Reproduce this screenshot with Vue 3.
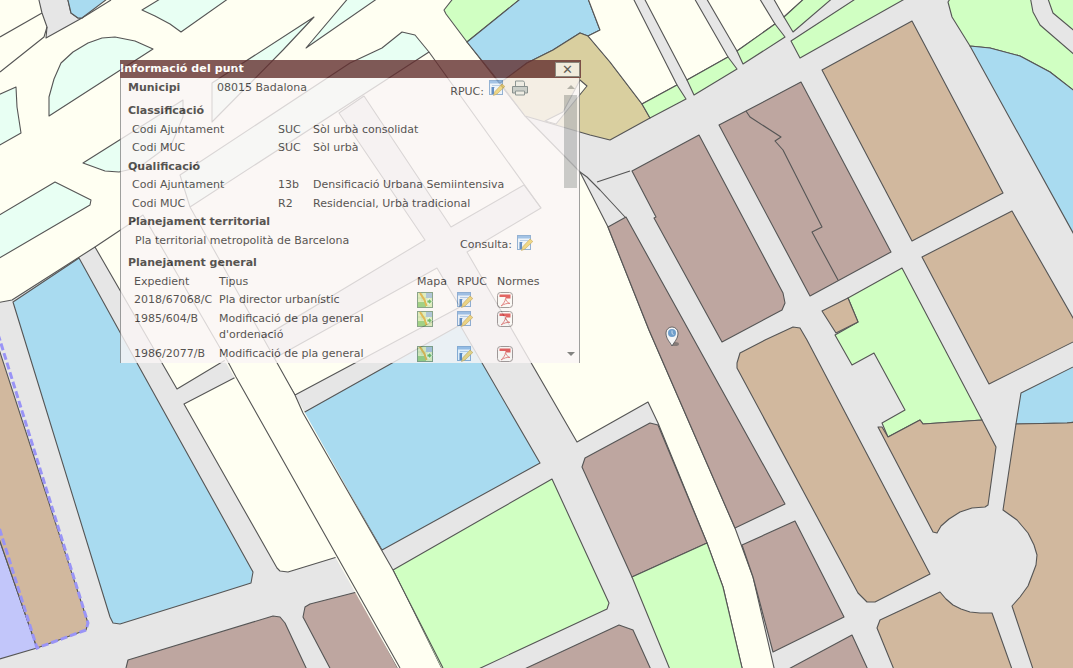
<script setup>
const raw = [
  ['ivory','0,0 600,0 467,42 525,116 580,172 608,227 649,330 735,528 753,577 775,668 743,668 723,587 707,543 658,423 648,402 577,442 467,252 541,208 524,185 451,227 364,96 339,113 425,240 177,389 95,247 12,300 0,303'],
  ['ivory','184,404 236,377 337,557 288,572 280,571 277,568'],
  ['ivory','273,359 437,268 460,307 295,395'],
  ['grey','38,0 67,0 71,13 78,18 82,18 46,38 47,27 42,13'],
  ['blue','67,0 111,0 82,18 78,18 71,13'],
  ['mint','142,10 165,0 232,0 181,32 170,24 155,16'],
  ['mint','49,116 49,97 54,79 61,63 73,52 88,43 102,38 115,37 135,41 153,49'],
  ['mint','0,96 16,87 17,107 21,133 0,147'],
  ['mint','83,163 183,100 183,117 172,143 145,163 132,169 119,172 105,171'],
  ['mint','0,217 55,182 91,200 90,205 0,260'],
  ['mint','212,83 314,17 283,50 212,122'],
  ['mint','306,48 350,0 381,0'],
  ['mint','350,63 382,48 402,32 415,35 429,52 190,207 180,175'],
  ['green','444,10 455,0 524,0 467,42 446,14'],
  ['blue','467,42 524,0 587,0 600,30 588,36 580,33 553,50 527,63 500,83'],
  ['khaki','500,83 527,63 553,50 580,33 588,36 610,62 642,104 650,118 610,140 590,135 525,116'],
  ['ivory','580,80 587,86 556,124 545,121 563,112'],
  ['ivory','600,30 587,0 632,0 677,85 642,104 610,62 588,36'],
  ['green','642,104 677,85 686,99 650,118'],
  ['ivory','643,0 693,0 728,57 687,80'],
  ['green','687,80 728,57 737,69 694,95'],
  ['ivory','705,0 758,0 775,24 737,51'],
  ['green','737,51 775,24 785,37 743,64'],
  ['ivory','772,0 807,0 784,17'],
  ['green','784,17 807,0 835,0 793,32'],
  ['green','791,41 860,0 910,0 800,58'],
  ['green','948,2 952,0 1030,0 1033,12 1040,25 1073,57 1073,93 1050,72 1020,56 990,48 970,46 952,17'],
  ['green','1047,0 1073,0 1073,33 1053,13'],
  ['blue','970,46 990,48 1020,56 1050,72 1073,93 1073,240'],
  ['brown','632,171 699,135 783,293 785,303 782,310 722,342 654,218 656,217'],
  ['brown','719,125 746,111 801,82 891,252 810,296'],
  ['tan','822,70 912,21 1003,193 912,241'],
  ['tan','922,257 1012,211 1073,325 1073,340 989,384'],
  ['brown','608,227 626,217 785,504 735,528 649,330'],
  ['green','848,298 902,268 982,420 923,424 920,420 888,437 882,423 905,410 874,353 852,365 835,335 858,322'],
  ['tan','822,311 848,298 858,322 836,333'],
  ['tan','737,368 737,363 740,353 765,340 793,327 800,328 807,340 930,574 875,602 867,602 858,593'],
  ['tan','878,427 882,427 888,437 920,420 923,424 982,420 996,447 988,505 985,507 972,508 960,512 949,519 941,526 937,533 933,532'],
  ['blue','1021,393 1073,365 1073,422 1067,423 1016,424'],
  ['tan','1016,424 1067,423 1073,422 1073,668 1034,668 1012,606 1020,597 1028,586 1033,573 1036,565 1037,555 1034,545 1028,533 1017,520 1003,510'],
  ['tan','877,628 880,620 940,592 946,599 953,605 961,609 970,612 980,613 992,613 1013,668 895,668'],
  ['brown','582,467 585,458 650,423 658,425 707,543 632,577'],
  ['green','632,577 707,543 723,587 743,668 671,668'],
  ['brown','742,545 795,521 844,617 773,652 753,577'],
  ['brown','783,668 852,635 869,668'],
  ['brown','518,668 619,625 633,630 652,668'],
  ['blue','13,302 79,258 137,363 253,572 251,583 213,595 120,624 113,623 110,617'],
  ['blue','303,413 460,325 540,463 382,550'],
  ['green','393,570 552,479 609,603 607,609 472,668 443,668'],
  ['brown','125,668 128,660 273,616 280,617 285,623 308,668'],
  ['brown','303,617 305,607 310,604 357,592 400,668 332,668'],
  ['lilac','0,530 37,648 0,660'],
  ['tan','0,340 88,623 86,630 37,648 0,530'],
]
// Push edges lying on the picture border outside it, so their outline is not seen.
const bleed = (pts) => pts.split(' ').map((p) => {
  let [x, y] = p.split(',').map(Number)
  if (x === 0) x = -4
  if (x === 1073) x = 1077
  if (y === 0) y = -4
  if (y === 668) y = 672
  return `${x},${y}`
}).join(' ')
const shapes = raw.map(([c, p]) => [c, bleed(p)])
const road = bleed('143,215 190,207 295,395 393,570 443,668 400,668')
const lines = [
  '0,37 42,13',
  '0,72 44,37 47,27',
  '82,18 111,0',
  '95,247 143,215 227,360 236,377 400,668',
  '190,207 295,395 303,413 393,570 443,668',
  '429,52 541,208',
  '580,172 587,177 600,190 625,217',
  '597,182 630,171',
  '746,111 750,117 781,137 775,141 783,150 822,227 812,232 838,280',
]

const cols = [
  [
    { t: 'Codi Ajuntament', c: 'SUC', d: 'Sòl urbà consolidat' },
    { t: 'Codi MUC', c: 'SUC', d: 'Sòl urbà' },
  ],
  [
    { t: 'Codi Ajuntament', c: '13b', d: 'Densificació Urbana Semiintensiva' },
    { t: 'Codi MUC', c: 'R2', d: 'Residencial, Urbà tradicional' },
  ],
]
const plans = [
  { e: '2018/67068/C', t: 'Pla director urbanístic' },
  { e: '1985/604/B', t: "Modificació de pla general d'ordenació" },
  { e: '1986/2077/B', t: 'Modificació de pla general' },
]
</script>

<template>
  <div class="page">
    <svg class="map" viewBox="0 0 1073 668" width="1073" height="668">
      <defs>
        <symbol id="i-map" viewBox="0 0 16 16">
          <rect x=".5" y=".5" width="15" height="15" fill="#d8e8b0" stroke="#6f8f70"/>
          <path d="M9 1h6v5H9z" fill="#9db8d0"/>
          <path d="M1 10h8v5H1z" fill="#8cc66c"/>
          <path d="M1 6h8M5 1v8" stroke="#b7cf94" stroke-width=".7"/>
          <path d="M3 1 7.500 8l2 6" fill="none" stroke="#d9a830" stroke-width="2"/>
          <path d="M10 8h2V6l3 3.500-3 3.500v-2h-2z" fill="#58ac48" stroke="#f4fff0" stroke-width=".7"/>
        </symbol>
        <symbol id="i-edit" viewBox="0 0 16 16">
          <rect x=".5" y=".5" width="13" height="14" fill="#eaf2fb" stroke="#7aa0cc"/>
          <rect x="1" y="1" width="12" height="2.500" fill="#8db5e3"/>
          <path d="M3 5.500h8M3 7.500h3" stroke="#a9c4e4"/>
          <rect x="2.500" y="7" width="2.500" height="7" fill="#3f74b8"/>
          <path d="M13 4 15.800 6.500 8 14l-3.500 1.500L6 11.500z" fill="#edcf6c" stroke="#b8953a" stroke-width=".6"/>
        </symbol>
        <symbol id="i-pdf" viewBox="0 0 16 16">
          <rect x=".5" y=".5" width="15" height="15" rx="3" fill="#fbf8f6" stroke="#8d8585"/>
          <path d="M2.500 2.500h11v4H8.500V5H2.500z" fill="#dc4040"/>
          <path d="M8.500 6.500c0 3-3 6-4.500 7.500 3-2 6-3 9-2.500-3-1-4-3-4.500-5z" fill="none" stroke="#dc6a6a"/>
        </symbol>
        <symbol id="i-print" viewBox="0 0 16 16">
          <path d="M3.500 7V1h8l1 1.500V7z" fill="#f4f4f4" stroke="#7d8a92"/>
          <path d="M.5 6.500h15v6.500H.5z" fill="#c7ced3" stroke="#76828a" stroke-linejoin="round"/>
          <path d="M3.500 11h9v4h-9z" fill="#f4f4f4" stroke="#7d8a92"/>
        </symbol>
      </defs>
      <rect width="1073" height="668" class="grey"/>
      <polygon v-for="(s, i) in shapes" :key="i" :class="s[0]" class="area" :points="s[1]"/>
      <polygon class="ivory" :points="road"/>
      <polyline v-for="(l, i) in lines" :key="'l' + i" class="line" :points="l"/>
      <polygon class="dash" points="-2,334 88,623 86,630 37,648 -2,524"/>
      <g>
        <ellipse cx="675" cy="344" rx="4" ry="2" fill="#555" opacity=".55"/>
        <path d="M672 346c-2-4-6-7-6-13a6 6 0 0 1 12 0c0 6-4 9-6 13z" fill="#f5f5f5" stroke="#3a3f44" stroke-width=".7"/>
        <circle cx="672" cy="333" r="4" fill="#6f9ecb"/>
        <path d="M672 330.500v3l1.500 1" stroke="#e6eef6" fill="none" stroke-width=".8"/>
      </g>
    </svg>

    <section class="dialog">
      <header class="title">
        <span>Informació del punt</span>
        <button class="close">✕</button>
      </header>
      <div class="body">
        <div class="content">
          <div class="row muni">
            <b class="muni-label">Municipi</b>
            <span>08015 Badalona</span>
            <span class="right rpuc">RPUC:</span>
            <svg class="ic-top"><use href="#i-edit"/></svg>
            <svg class="ic-print"><use href="#i-print"/></svg>
          </div>
          <div class="row head gap1">Classificació</div>
          <div v-for="r in cols[0]" :key="r.t" class="row cls">
            <span>{{ r.t }}</span><span>{{ r.c }}</span><span>{{ r.d }}</span>
          </div>
          <div class="row head">Qualificació</div>
          <div v-for="r in cols[1]" :key="r.t" class="row cls">
            <span>{{ r.t }}</span><span>{{ r.c }}</span><span>{{ r.d }}</span>
          </div>
          <div class="row head">Planejament territorial</div>
          <div class="row terr">
            <span>Pla territorial metropolità de Barcelona</span>
            <span class="right consulta">Consulta:</span>
            <svg class="ic-cons"><use href="#i-edit"/></svg>
          </div>
          <div class="row head gap2">Planejament general</div>
          <div class="row plan plan-head">
            <span>Expedient</span><span>Tipus</span><span>Mapa</span><span>RPUC</span><span>Normes</span>
          </div>
          <div v-for="p in plans" :key="p.e" class="row plan">
            <span>{{ p.e }}</span>
            <span class="tipus">{{ p.t }}</span>
            <span><svg class="ic"><use href="#i-map"/></svg></span>
            <span><svg class="ic"><use href="#i-edit"/></svg></span>
            <span><svg class="ic"><use href="#i-pdf"/></svg></span>
          </div>
        </div>
        <div class="scroll">
          <i class="arrow up"></i>
          <div class="thumb"></div>
          <i class="arrow down"></i>
        </div>
      </div>
    </section>
  </div>
</template>

<style>
html, body { margin: 0; padding: 0; }
</style>

<style scoped>
.page {
  position: relative;
  width: 1073px;
  height: 668px;
  overflow: hidden;
  background: #e6e6e6;
}
.map { display: block; }
.area { stroke: #555; stroke-width: 1.100; stroke-linejoin: round; }
.ivory { fill: #fffff2; }
.grey { fill: #e6e6e6; }
.brown { fill: #bea6a0; }
.tan { fill: #d1b89e; }
.green { fill: #d0ffc2; }
.blue { fill: #a9dbf0; }
.mint { fill: #e8fff3; }
.khaki { fill: #d9cf9f; }
.lilac { fill: #c2c6fa; }
.line { fill: none; stroke: #555; stroke-width: 1.100; stroke-linejoin: round; }
.dash {
  fill: none;
  stroke: #9a94f6;
  stroke-width: 3;
  stroke-dasharray: 7 3;
}
.dialog {
  position: absolute;
  left: 120px;
  top: 60px;
  width: 460px;
  height: 303px;
  box-sizing: border-box;
  display: flex;
  flex-direction: column;
  opacity: .8;
  background: #fbf6f6;
  border-left: 1px solid #888;
  border-right: 1px solid #888;
  font: 11px/18.500px "DejaVu Sans", Verdana, sans-serif;
  color: #2e2a2a;
}
.title {
  height: 18px;
  flex: none;
  margin-left: -1px;
  margin-right: -2px;
  display: flex;
  align-items: center;
  justify-content: space-between;
  background: #643030;
  color: #fff;
  font-weight: bold;
  line-height: 18px;
  letter-spacing: .1px;
}
.close {
  width: 25px;
  height: 15px;
  margin: 0 1px 0 0;
  padding: 0;
  border: 1px solid #777;
  background: #f6f2ec;
  color: #444;
  font: bold 13px/13px "DejaVu Sans", sans-serif;
}
.body {
  flex: 1;
  display: flex;
  min-height: 0;
  overflow: hidden;
}
.content {
  flex: 1;
  min-width: 0;
  padding: 1px 0 0 7px;
}
.row { height: 18.500px; }
.gap1 { margin-top: 4.500px; }
.gap2 { margin-top: 3.500px; }
.head { font-weight: bold; }
.muni { display: flex; align-items: flex-start; padding-right: 34px; }
.muni-label { width: 89px; flex: none; }
.right { margin-left: auto; }
.rpuc { position: relative; top: 4px; }
.ic-top { width: 16px; height: 16px; margin-left: 5px; margin-top: 1px; }
.ic-print { width: 16px; height: 16px; margin-left: 7px; margin-top: 1px; }
.cls {
  display: grid;
  grid-template-columns: 146px 35px 1fr;
  padding-left: 4px;
}
.terr { display: flex; align-items: flex-start; padding: 0 29px 0 7px; }
.consulta { position: relative; top: 4px; }
.ic-cons { width: 16px; height: 16px; margin-left: 5px; margin-top: 3px; }
.plan {
  display: grid;
  grid-template-columns: 85px 198px 40px 40px 1fr;
  padding-left: 6px;
}
.plan-head { margin-top: .5px; }
.plan:nth-last-child(2) { height: 35px; }
.tipus { line-height: 16px; padding-top: 1px; width: 165px; }
.ic { display: block; width: 16px; height: 16px; margin-top: 1px; }
.scroll {
  width: 17px;
  flex: none;
  position: relative;
}
.thumb {
  position: absolute;
  left: 2px;
  right: 2px;
  top: 17px;
  height: 93px;
  background: #bdbdbd;
}
.arrow {
  position: absolute;
  left: 5px;
  border-left: 4px solid transparent;
  border-right: 4px solid transparent;
}
.up { top: 7px; border-bottom: 4px solid #aaa; }
.down { bottom: 7px; border-top: 4px solid #666; }
</style>
